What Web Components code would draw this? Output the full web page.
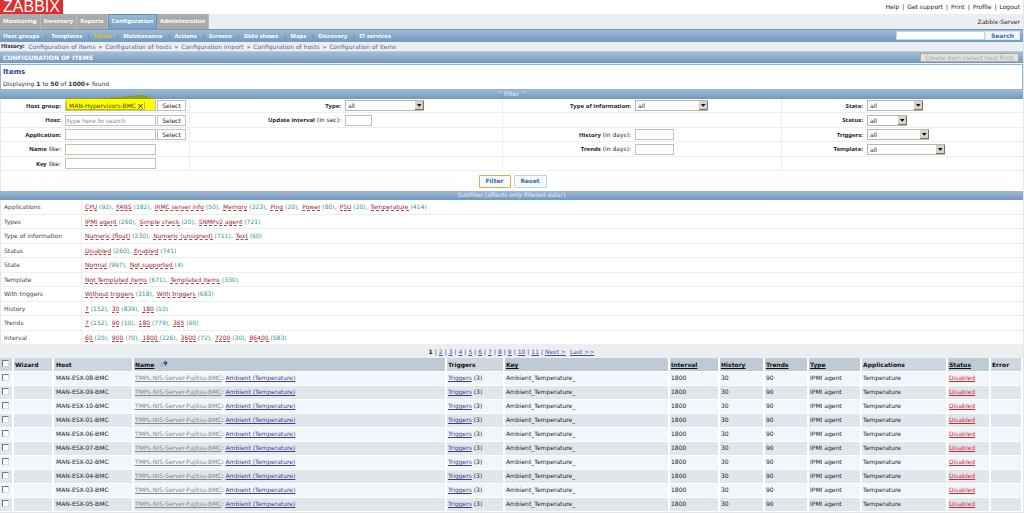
<!DOCTYPE html>
<html lang="en">
<head>
<meta charset="utf-8">
<title>Zabbix: Configuration of items</title>
<style>
  body { margin: 0; background: #fff; overflow-x: hidden; }
</style>
</head>
<body>
<zbx-page></zbx-page>

<script>
const base = `
  *, *::before, *::after { box-sizing: border-box; }
  button, input, select { font: inherit; margin: 0; border-radius: 0; color: inherit; }
  a { color: inherit; }
`;

function define(name, render) {
  customElements.define(name, class extends HTMLElement {
    constructor() { super(); this.attachShadow({ mode: 'open' }); }
    connectedCallback() { this.shadowRoot.innerHTML = render(this); }
  });
}

/* Drop-down with a raised arrow button */
define('zbx-select', el => `
  <style>${base}
    :host { display: block; position: relative; height: 11px; width: var(--w, 60px); }
    select { display: block; appearance: none; width: 100%; height: 11px; padding: 0 10px 0 2px;
      border: 1px solid #b9b7a8; background: #fff; color: #222; line-height: 9px; }
    svg { position: absolute; right: 0; top: 1px; pointer-events: none; }
  </style>
  <select aria-label="${el.getAttribute('label')}"><option>all</option></select>
  <svg width="9" height="9" viewBox="0 0 9 9" aria-hidden="true">
    <rect width="9" height="9" fill="#77756c"/><rect width="8" height="8" fill="#d6d3ca"/>
    <path d="M2 3h4.500L4.250 5.800z" fill="#000"/>
  </svg>`);

/* Single line text box */
define('zbx-input', el => `
  <style>${base}
    :host { display: block; width: var(--w, 91px); }
    input { display: block; width: 100%; height: 11px; padding: 0 1px; background: #fff;
      border: 1px solid #c4c1b4; color: #333; }
    input::placeholder { color: #888; opacity: 1; }
  </style>
  <input type="text" aria-label="${el.getAttribute('label')}" placeholder="${el.getAttribute('hint') || ''}">`);

define('zbx-pick', () => `
  <style>${base}
    :host { display: block; }
    button { display: block; width: 29px; height: 11px; padding: 0; border: 1px solid #c4c1b4;
      background: #fff; color: #222; line-height: 9px; }
  </style>
  <button type="button">Select</button>`);

/* The chosen host group, marked in yellow */
define('zbx-chosen', () => `
  <style>${base}
    :host { display: block; position: relative; width: 91px; height: 11px; border: 1px solid #c4c1b4; background: #ff0; }
    span { display: flex; align-items: center; gap: 2px; width: max-content; height: 9px; padding: 0 1px 0 2px;
      border: 1px solid #c0bc00; color: #444400; line-height: 7px; }
    button { display: block; border: 0; padding: 0; background: none; width: 5px; height: 6px; }
    button svg { display: block; }
    .mark { position: absolute; left: 0; top: -7px; pointer-events: none; }
  </style>
  <span>MAN-Hypervisors-BMC <button type="button" aria-label="Remove"><svg width="5" height="6" viewBox="0 0 5 6"><path d="M.5 1l4 4.500M4.500 1l-4 4.500" stroke="#333" stroke-width="1"/></svg></button></span>
  <svg class="mark" width="91" height="8" viewBox="0 0 91 8" aria-hidden="true">
    <path d="M0 4.500H30L60 2.500L72 1Q84 1 85 5H0z" fill="#8b9e1c"/>
    <path d="M0 5H89V8H0z" fill="#ff0"/>
  </svg>`);

define('zbx-header', () => `
  <style>${base}
    :host { display: block; }
    header { display: flex; justify-content: space-between; align-items: flex-start; height: 14px; padding-right: 3px; }
    .logo { width: 63px; height: 14px; background: #dc2f2f; color: #fff; text-align: center;
      font: 16px/13px "Liberation Sans", sans-serif; text-decoration: none; }
    .links { display: flex; gap: 3px; line-height: 13px; color: #222; }
    .links a { text-decoration: none; }
    .menu { display: flex; justify-content: space-between; background: #ebeff2; height: 15px; padding-right: 3px; line-height: 15px; }
    .server { color: #222; }
    nav { display: flex; font-family: "Noto Sans", sans-serif; font-weight: bold; }
    .tabs a { padding: 0 3px; color: #fff; text-decoration: none;
      background: #aaa; border-right: 1px solid #b9b9b9; text-align: center; }
    .tabs a.on { background: linear-gradient(#96b9d6, #7a9fc4); border: 1px solid #6090bf; border-bottom: 0; line-height: 13px; }
    .sub { display: flex; justify-content: space-between; align-items: center; height: 13px; padding: 0 3px;
      background: linear-gradient(#7397ba 0 1px, #9fbbd3 1px, #7399c0); color: #fff; }
    .sub nav { gap: 5px; }
    .sub a { text-decoration: none; }
    .sub a.on { color: #f0c010; }
    .sub i { width: 2px; font-style: normal; font-weight: normal; color: #55789c; }
    form { display: flex; }
    form input { width: 89px; height: 9px; border: 1px solid #c3d3e4; background: #fff; padding: 0 2px; color: #222; }
    form button { width: 35px; height: 9px; border: 1px solid #dbe6f0; background: #f4f8fc; color: #3a6ea5; font-weight: bold; padding: 0; line-height: 7px; }
    .crumbs { display: flex; gap: 3px; background: #ebeff2; line-height: 9px; padding-left: 1px; color: #5b5b9c; }
    .crumbs a { text-decoration: none; }
    .crumbs b { color: #22224f; font-family: "Noto Sans", sans-serif; padding-right: 1px; }
    .crumbs i { font-style: normal; color: #222; }
  </style>
  <header>
    <a class="logo" href="#">ZABBIX</a>
    <div class="links"><a href="#">Help</a><span>|</span><a href="#">Get support</a><span>|</span><a href="#">Print</a><span>|</span><a href="#">Profile</a><span>|</span><a href="#">Logout</a></div>
  </header>
  <div class="menu">
    <nav class="tabs">${['Monitoring','Inventory','Reports','Configuration','Administration'].map(t => `<a href="#"${t === 'Configuration' ? ' class="on"' : ''}>${t}</a>`).join('')}</nav>
    <span class="server">Zabbix-Server</span>
  </div>
  <div class="sub">
    <nav>${['Host groups','Templates','Hosts','Maintenance','Actions','Screens','Slide shows','Maps','Discovery','IT services'].map(t => `<a href="#"${t === 'Hosts' ? ' class="on"' : ''}>${t}</a>`).join('<i>|</i>')}</nav>
    <form><input type="text" aria-label="Search"><button type="button">Search</button></form>
  </div>
  <div class="crumbs"><b>History:</b>${['items','hosts','import','hosts','items'].map(t => `<a href="#">Configuration ${t === 'import' ? '' : 'of '}${t}</a>`).join('<i>»</i>')}</div>`);

define('zbx-bar', () => `
  <style>${base}
    :host { display: block; height: 9px; line-height: 8px; text-align: center; color: #e6eff7;
      background: linear-gradient(#9cbad4, #7399c0); }
  </style><slot></slot>`);

define('zbx-title', () => `
  <style>${base}
    :host { display: block; background: #ebeff2; }
    .bar { display: flex; justify-content: space-between; align-items: center; height: 12px; padding: 0 4px 0 3px;
      background: linear-gradient(#a3bfd6, #7399c0); border-top: 1px solid #b9cddd; color: #fff; }
    h1 { margin: 0; font-size: 6px; }
    button { width: 99px; height: 9px; padding: 0; border: 1px solid #a9a9a9; background: #e2e2e0; color: #a8a8a0; line-height: 7px; }
    .box { margin-top: 1px; padding: 2px; background: #fff; border: 1px solid #8db4d3; height: 26px; color: #333; }
    h2 { margin: 0; font-size: 7px; line-height: 10px; color: #21478c; }
    p { margin: 0; line-height: 13px; }
  </style>
  <div class="bar"><h1>CONFIGURATION OF ITEMS</h1><button type="button" disabled>Create item (select host first)</button></div>
  <div class="box"><h2>Items</h2><p>Displaying <b>1</b> to <b>50</b> of <b>1000+</b> found</p></div>`);

const filterRows = [
  ['<b>Host group:</b>', '<zbx-chosen></zbx-chosen><zbx-pick></zbx-pick>',
   '<b>Type:</b>', '<zbx-select label="Type" style="--w:79px"></zbx-select>',
   '<b>Type of information:</b>', '<zbx-select label="Type of information" style="--w:73px"></zbx-select>',
   '<b>State:</b>', '<zbx-select label="State" style="--w:56px"></zbx-select>'],
  ['<b>Host:</b>', '<zbx-input label="Host" hint="type here to search"></zbx-input><zbx-pick></zbx-pick>',
   '<b>Update interval</b> (in sec):', '<zbx-input label="Update interval" style="--w:27px"></zbx-input>',
   '', '', '<b>Status:</b>', '<zbx-select label="Status" style="--w:40px"></zbx-select>'],
  ['<b>Application:</b>', '<zbx-input label="Application"></zbx-input><zbx-pick></zbx-pick>', '', '',
   '<b>History</b> (in days):', '<zbx-input label="History" style="--w:39px"></zbx-input>',
   '<b>Triggers:</b>', '<zbx-select label="Triggers" style="--w:62px"></zbx-select>'],
  ['<b>Name</b> like:', '<zbx-input label="Name like"></zbx-input>', '', '',
   '<b>Trends</b> (in days):', '<zbx-input label="Trends" style="--w:39px"></zbx-input>',
   '<b>Template:</b>', '<zbx-select label="Template" style="--w:78px"></zbx-select>'],
  ['<b>Key</b> like:', '<zbx-input label="Key like"></zbx-input>', '', '', '', '', '', '']
];

define('zbx-filter', () => `
  <style>${base}
    :host { display: block; background: #fff; color: #222; border-left: 1px solid #e4e8ec; }
    .row { display: grid; grid-template-columns: 64fr 125fr 155fr 158fr 132fr 147fr 85fr 156fr; height: 15px;
      border-bottom: 1px solid #eeeeee; }
    .row:nth-child(odd) { height: 14px; }
    .row > div { display: flex; align-items: center; gap: 1px; min-width: 0; }
    .label { justify-content: flex-end; padding-right: 4px; white-space: pre; }
    .label b { font-family: "Noto Sans", sans-serif; }
    .row > div:nth-child(even):not(:last-child) { border-right: 1px solid #eeeeee; }
    .actions { display: flex; justify-content: center; align-items: center; gap: 3px; height: 20px; padding-left: 1px; }
    .actions button { height: 13px; width: 33px; padding: 0; border: 1px solid #c3d3e4; border-radius: 1px; background: #f6fafd;
      color: #3f7199; font-weight: bold; }
    .actions button.go { border-color: #ee9f58; width: 32px; }
  </style>
  <form>
  ${filterRows.map(r => `<div class="row">${r.map((c, i) => `<div${i % 2 ? '' : ' class="label"'}>${i % 2 ? c : `<span>${c}</span>`}</div>`).join('')}</div>`).join('')}
  <div class="actions"><button type="button" class="go">Filter</button><button type="button">Reset</button></div>
  </form>`);

const subfilter = {
  'Applications': [['CPU',92],['FANS',182],['iRMC server info',50],['Memory',223],['Ping',20],['Power',80],['PSU',20],['Temperature',414]],
  'Types': [['IPMI agent',260],['Simple check',20],['SNMPv2 agent',721]],
  'Type of information': [['Numeric (float)',230],['Numeric (unsigned)',711],['Text',60]],
  'Status': [['Disabled',260],['Enabled',741]],
  'State': [['Normal',997],['Not supported',4]],
  'Template': [['Not Templated items',671],['Templated items',330]],
  'With triggers': [['Without triggers',318],['With triggers',683]],
  'History': [['7',152],['30',839],['180',10]],
  'Trends': [['7',152],['90',10],['180',779],['365',60]],
  'Interval': [['60',20],['900',70],['1800',226],['3600',72],['7200',30],['86400',583]]
};

define('zbx-subfilter', () => `
  <style>${base}
    :host { display: block; background: #fff; border-left: 1px solid #e4e8ec; color: #444; }
    dl { margin: 0; }
    dl > div { display: grid; grid-template-columns: 81px 1fr; height: 15px; border-bottom: 1px solid #eeeeee; line-height: 14px; }
    dl > div:nth-child(even) { height: 14px; }
    dt { padding-left: 3px; border-right: 1px solid #eeeeee; }
    dd { display: flex; gap: 3px; margin: 0; padding-left: 3px; white-space: nowrap; color: #2f9494; }
    a { color: #9c2430; text-decoration: none; border-bottom: 1px dashed #b04450; }
  </style>
  <dl>${Object.entries(subfilter).map(([k, v]) => `<div><dt>${k}</dt><dd>${v.map(([n, c], i) => `<span><a href="#">${n}</a> (${c})${i < v.length - 1 ? ',' : ''}</span>`).join('')}</dd></div>`).join('')}</dl>`);

define('zbx-pager', () => `
  <style>${base}
    :host { display: flex; justify-content: center; gap: 2px; background: #ebeff2; line-height: 14px; height: 13px; color: #333; }
    a { color: #4a4a9c; }
    a:last-child { margin-left: 2px; }
    b { color: #111; }
  </style><b>1</b><span>|</span>${[2,3,4,5,6,7,8,9,10,11].map(n => `<a href="#">${n}</a><span>|</span>`).join('')}<a href="#">Next &gt;</a><a href="#">Last &gt;&gt;</a>`);

const hosts = ['08','09','10','01','06','07','02','04','03','05'];

define('zbx-items', () => `
  <style>${base}
    :host { display: block; border-bottom: 2px solid #e4e4e0; }
    table { width: 100%; table-layout: fixed; border-collapse: separate; border-spacing: 0; color: #222; }
    th, td { height: 14px; padding: 0 0 0 1px; text-align: left; white-space: nowrap;
      border-right: 2px solid #fff; border-bottom: 1px solid #fff; }
    th { background: #ced7e0; color: #111; line-height: 13px; }
    th.sort { background: #becbd5; }
    td { background: #f1f6fa; line-height: 12px; padding-bottom: 1px; }
    td:nth-child(3), th:nth-child(3) { padding-left: 2px; }
    tr:nth-child(even) td { background: #e0e6ec; }
    input { appearance: none; display: block; width: 7px; height: 7px; background: #fff;
      border: 1px solid #ddd; border-top-color: #777; border-left-color: #777; margin: 0 0 2px 1px; }
    .tpl { color: #888; }
    .link { color: #423a8c; }
    .off { color: #e02030; }
    svg { margin-left: 2px; vertical-align: 0; }
  </style>
  <table>
    <colgroup>${[14,40,80,'',58,165,50,45,44,53,86,43,32].map(w => `<col${w ? ` style="width:${w}px"` : ''}>`).join('')}</colgroup>
    <thead><tr><th><input type="checkbox" aria-label="All items"></th><th>Wizard</th><th>Host</th>
      <th class="sort"><a href="#">Name</a> <svg width="9" height="6" viewBox="0 0 9 6" aria-hidden="true"><path d="M2.500 1v4M.5 3.500L2.500 5.500L4.500 3.500" fill="none" stroke="#aaa"/><path d="M6.500 5V1M4.500 2.500L6.500.5L8.500 2.500" fill="none" stroke="#245bb0" stroke-width="1.200"/></svg></th>
      <th>Triggers</th>${['Key','Interval','History','Trends','Type'].map(t => `<th class="sort"><a href="#">${t}</a></th>`).join('')}
      <th>Applications</th><th class="sort"><a href="#">Status</a></th><th>Error</th></tr></thead>
    <tbody>${hosts.map(h => `<tr><td><input type="checkbox" aria-label="MAN-ESX-${h}-BMC"></td><td></td><td>MAN-ESX-${h}-BMC</td>
      <td><a class="tpl" href="#">TMPL-NIS-Server-Fujitsu-BMC</a>: <a class="link" href="#">Ambient (Temperature)</a></td>
      <td><a class="link" href="#">Triggers</a> (3)</td><td>Ambient_Temperature_</td><td>1800</td><td>30</td><td>90</td>
      <td>IPMI agent</td><td>Temperature</td><td><a class="off" href="#">Disabled</a></td><td></td></tr>`).join('')}</tbody>
  </table>`);

define('zbx-page', () => `
  <style>${base}
    :host { display: block; font: 6px/8px "DejaVu Sans", sans-serif; border-right: 1px solid #e4e6e8; }
  </style>
  <zbx-header></zbx-header>
  <zbx-title></zbx-title>
  <zbx-bar>⌃ Filter ⌃</zbx-bar>
  <zbx-filter></zbx-filter>
  <zbx-bar>Subfilter [affects only filtered data!]</zbx-bar>
  <zbx-subfilter></zbx-subfilter>
  <zbx-pager></zbx-pager>
  <zbx-items></zbx-items>`);
</script>
</body>
</html>
